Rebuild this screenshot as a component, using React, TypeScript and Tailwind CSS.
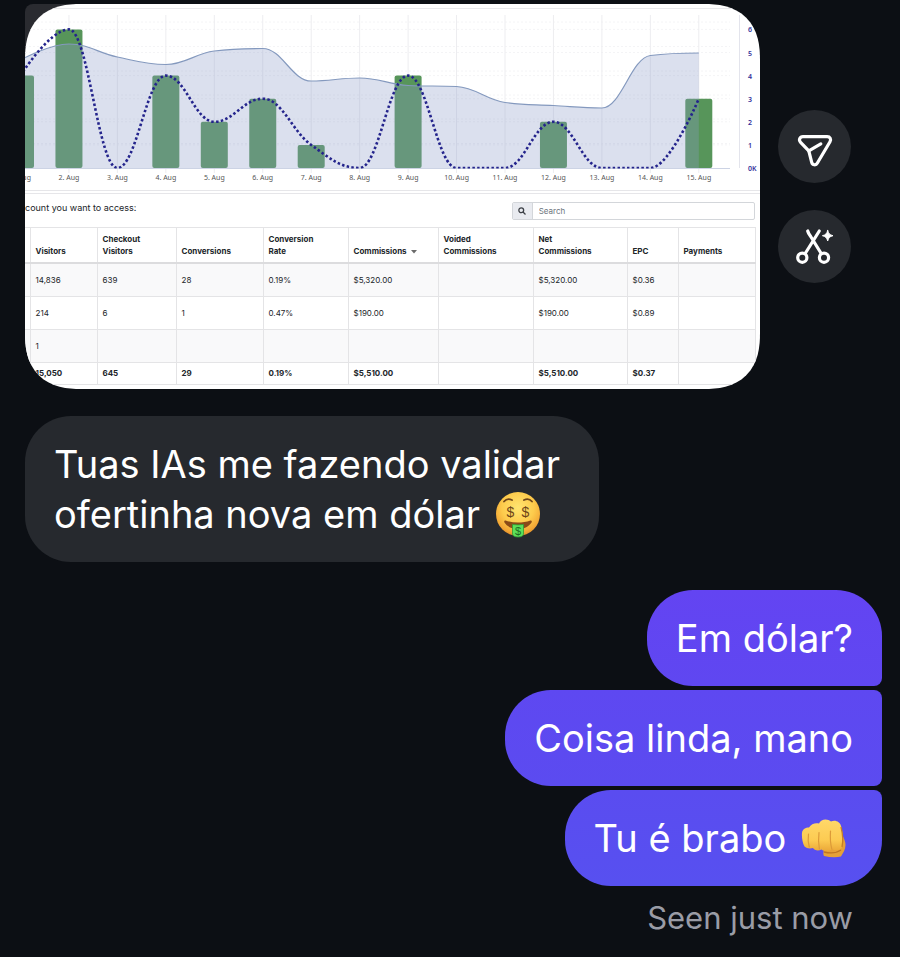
import React from 'react';

interface Point {
  x: number;
  y: number;
}

interface ReportRow {
  visitors: string;
  checkout?: string;
  conversions?: string;
  rate?: string;
  commissions?: string;
  net?: string;
  epc?: string;
}

const ROWS: ReportRow[] = [
  { visitors: '14,836', checkout: '639', conversions: '28', rate: '0.19%', commissions: '$5,320.00', net: '$5,320.00', epc: '$0.36' },
  { visitors: '214', checkout: '6', conversions: '1', rate: '0.47%', commissions: '$190.00', net: '$190.00', epc: '$0.89' },
  { visitors: '1' },
];

const TOTAL: ReportRow = {
  visitors: '15,050', checkout: '645', conversions: '29', rate: '0.19%', commissions: '$5,510.00', net: '$5,510.00', epc: '$0.37',
};

// Daily values for August 1 - 15
const CONVERSIONS = [4, 6, 0, 4, 2, 3, 1, 0, 4, 0, 0, 2, 0, 0, 3];
const VISITORS_Y = [56, 40, 53, 60.5, 47, 44.5, 77, 74, 81.5, 82.5, 98.5, 101.5, 104, 51.5, 49];

const BASE = 164;
const dayX = (i: number) => -4.5 + i * 48.45;
const valueY = (v: number) => BASE - v * 23.1;

// Smooth line through the points without overshooting the local extremes
const spline = (pts: Point[]) => {
  const ctrl = pts.map((p, i) => {
    const prev = pts[i - 1];
    const next = pts[i + 1];
    if (!prev || !next) return { l: p, r: p };
    const l = { x: (1.5 * p.x + prev.x) / 2.5, y: (1.5 * p.y + prev.y) / 2.5 };
    const r = { x: (1.5 * p.x + next.x) / 2.5, y: (1.5 * p.y + next.y) / 2.5 };
    const fix = ((r.y - l.y) * (r.x - p.x)) / (r.x - l.x) + p.y - r.y;
    l.y += fix;
    r.y += fix;
    const lMax = Math.max(prev.y, p.y);
    const lMin = Math.min(prev.y, p.y);
    if (l.y > lMax || l.y < lMin) {
      l.y = l.y > lMax ? lMax : lMin;
      r.y = 2 * p.y - l.y;
    }
    const rMax = Math.max(next.y, p.y);
    const rMin = Math.min(next.y, p.y);
    if (r.y > rMax || r.y < rMin) {
      r.y = r.y > rMax ? rMax : rMin;
      l.y = 2 * p.y - r.y;
    }
    return { l, r };
  });
  return pts.reduce(
    (d, p, i) =>
      i === 0
        ? `M${p.x} ${p.y}`
        : `${d}C${ctrl[i - 1].r.x} ${ctrl[i - 1].r.y} ${ctrl[i].l.x} ${ctrl[i].l.y} ${p.x} ${p.y}`,
    ''
  );
};

const Chart: React.FC = () => {
  const area = spline(VISITORS_Y.map((y, i) => ({ x: dayX(i), y })));
  const dots = spline(CONVERSIONS.map((v, i) => ({ x: dayX(i), y: valueY(v) })));

  return (
    <svg viewBox="0 0 735 186" className="block w-full h-auto" role="img" aria-label="Conversions and visitors by day">
      <clipPath id="plot">
        <rect x="0" y="0" width="735" height="164.5" />
      </clipPath>
      <path d="M0 4.5H735" stroke="#e9e9ec" />
      {[18, 42.5, 67, 91, 115, 139.5].map(y => (
        <path key={y} d={`M0 ${y}H705`} stroke="#f4f4f6" strokeDasharray="2 2" />
      ))}
      {[1, 2, 3, 4, 5, 6].map(v => (
        <path key={v} d={`M0 ${valueY(v)}H705`} stroke="#f4f4f6" strokeDasharray="2 2" />
      ))}
      {CONVERSIONS.map((_, i) => (
        <path key={i} d={`M${dayX(i)} 11V169`} stroke="#ededf0" />
      ))}
      <path d="M714.5 11V164" stroke="#e3e4ec" />
      {CONVERSIONS.map((v, i) =>
        v > 0 ? (
          <rect key={i} x={dayX(i) - 13.5} y={valueY(v)} width="27" height={v * 23.1} rx="2" fill="#57955a" />
        ) : null
      )}
      <path d={`${area}V${BASE}H${dayX(0)}Z`} fill="#8d9dc9" fillOpacity="0.315" />
      <path d={area} fill="none" stroke="#8499be" strokeWidth="1.2" />
      <path d="M0 164.5H705" stroke="#ccd3e4" />
      <path d={dots} fill="none" stroke="#24248c" strokeWidth="2.6" strokeDasharray="2.5 2.3" clipPath="url(#plot)" />
      <g fontFamily="'Noto Sans', sans-serif" fontSize="7" fill="#555" textAnchor="middle">
        <text x="6" y="176" textAnchor="end">ug</text>
        {CONVERSIONS.slice(1).map((_, i) => (
          <text key={i} x={dayX(i + 1)} y="176">{i + 2}. Aug</text>
        ))}
      </g>
      <g fontFamily="'Noto Sans', sans-serif" fontSize="7" fontWeight="600" fill="#33309a">
        {['0K', '1', '2', '3', '4', '5', '6'].map((label, v) => (
          <text key={label} x="723" y={valueY(v) + 3}>{label}</text>
        ))}
      </g>
    </svg>
  );
};

const TH = 'border border-[#e4e4e6] border-b-2 border-b-[#dcdcde] px-[5px] pb-[5px] pt-[5px] align-bottom text-left font-bold';
const TD = 'border border-[#e4e4e6] px-[5px] py-0';

const Cells: React.FC<{ row: ReportRow }> = ({ row }) => (
  <>
    <td className="border border-[#e4e4e6] border-l-0 p-0" />
    <td className={TD}>{row.visitors}</td>
    <td className={TD}>{row.checkout}</td>
    <td className={TD}>{row.conversions}</td>
    <td className={TD}>{row.rate}</td>
    <td className={TD}>{row.commissions}</td>
    <td className={TD} />
    <td className={TD}>{row.net}</td>
    <td className={TD}>{row.epc}</td>
    <td className={TD} />
  </>
);

const ReportCard: React.FC = () => (
  <div className="relative min-w-0 flex-1">
    <div className="absolute left-0 top-0 size-12 rounded-tl-lg bg-[#2a2b30]" />
    <div className="relative overflow-hidden rounded-[56px] bg-white text-[#212529] [corner-shape:superellipse(1.3)]">
      <Chart />
      <div className="h-1 border-y border-[#e6e6e9]" />
      <div className="flex items-start justify-between pb-[7px] pr-[5px] pt-2 text-[8px]">
        <label htmlFor="search" className="text-[9px] leading-[12px]">count you want to access:</label>
        <div className="flex h-[18px] w-1/3 overflow-hidden rounded-xs border border-[#d3d6da]">
          <button aria-label="Search" className="flex w-5 shrink-0 items-center justify-center border-r border-[#d3d6da] bg-[#e9ebf0]">
            <svg viewBox="0 0 16 16" className="size-2" fill="none" stroke="#3c4046" strokeWidth="2.6">
              <circle cx="6.5" cy="6.5" r="4.8" />
              <path d="M10 10l5 5" />
            </svg>
          </button>
          <input id="search" type="text" placeholder="Search" className="min-w-0 flex-1 px-1.5 outline-none placeholder:text-[#6c757d]" />
        </div>
      </div>
      <div className="pb-1 pr-[5px]">
        <table className="w-full table-fixed border-collapse text-[8px] leading-[12px]">
          <colgroup>
            <col className="w-[5px]" />
            <col className="w-[67px]" />
            <col className="w-[79px]" />
            <col className="w-[87px]" />
            <col className="w-[85px]" />
            <col className="w-[90px]" />
            <col className="w-[95px]" />
            <col className="w-[94px]" />
            <col className="w-[51px]" />
            <col className="w-[77px]" />
          </colgroup>
          <thead>
            <tr className="h-[35px]">
              <td className="border border-[#e4e4e6] border-b-2 border-b-[#dcdcde] border-l-0 p-0" />
              <th className={TH}>Visitors</th>
              <th className={TH}>Checkout<br />Visitors</th>
              <th className={TH}>Conversions</th>
              <th className={TH}>Conversion<br />Rate</th>
              <th className={TH}>
                Commissions
                <svg viewBox="0 0 6 4" className="ml-1 inline-block h-1 w-1.5" fill="#6b6b6b"><path d="M0 0h6L3 3.6z" /></svg>
              </th>
              <th className={TH}>Voided<br />Commissions</th>
              <th className={TH}>Net<br />Commissions</th>
              <th className={TH}>EPC</th>
              <th className={TH}>Payments</th>
            </tr>
          </thead>
          <tbody>
            {ROWS.map(row => (
              <tr key={row.visitors} className="h-[33px] odd:bg-[#f9f9fa]">
                <Cells row={row} />
              </tr>
            ))}
          </tbody>
          <tfoot>
            <tr className="h-[22px] font-bold">
              <Cells row={TOTAL} />
            </tr>
          </tfoot>
        </table>
      </div>
    </div>
  </div>
);

const ActionButton: React.FC<{ label: string; children: React.ReactNode }> = ({ label, children }) => (
  <button aria-label={label} className="size-[73px] rounded-full bg-[#26292e]">
    <svg viewBox="0 0 73 73" className="size-full" fill="none" stroke="#fff" strokeWidth="3.2" strokeLinecap="round" strokeLinejoin="round">
      {children}
    </svg>
  </button>
);

const MoneyFace: React.FC = () => (
  <svg viewBox="0 0 46 48" className="ml-1 inline-block h-12 w-[46px] align-[-11px]" role="img" aria-label="🤑">
    <defs>
      <radialGradient id="face" cx="0.5" cy="0.36" r="0.66">
        <stop offset="0" stopColor="#ffe571" />
        <stop offset="0.55" stopColor="#fdcb4c" />
        <stop offset="0.85" stopColor="#f3a836" />
        <stop offset="1" stopColor="#dd8727" />
      </radialGradient>
    </defs>
    <circle cx="23" cy="23" r="22" fill="url(#face)" />
    <path d="M9 10.500C11 8.200 14 7.600 17 9M29 9c3-1.400 6-.8 8 1.500" fill="none" stroke="#6f4518" strokeWidth="1.800" strokeLinecap="round" />
    <path d="M10.500 29.500c8 2.800 17 2.800 25 0 1 0 1.600.8 1.200 1.800C34 35.500 29.500 38 23 38S12 35.500 9.300 31.300c-.4-1 .2-1.800 1.200-1.800z" fill="#8a4b18" />
    <path d="M17.500 33.500q5.500.8 11 0v9.500q-.5 3-5.500 3t-5.500-3z" fill="#5ce05a" stroke="#2e9c35" strokeWidth="0.8" />
    <g fontFamily="'Liberation Sans', sans-serif" fill="#6f4518" textAnchor="middle">
      <text x="15.500" y="26" fontSize="14">$</text>
      <text x="30.500" y="26" fontSize="14">$</text>
      <text x="23" y="44" fontSize="11" fill="#1d6b22">$</text>
    </g>
  </svg>
);

const Fist: React.FC = () => (
  <svg viewBox="0 0 46 40" className="ml-1 mr-1.5 inline-block h-10 w-[46px] align-[-7px]" role="img" aria-label="👊">
    <defs>
      <linearGradient id="fist" x1="0" y1="0" x2="0" y2="1">
        <stop offset="0" stopColor="#ffd869" />
        <stop offset="0.65" stopColor="#fccb52" />
        <stop offset="1" stopColor="#eba838" />
      </linearGradient>
    </defs>
    <path d="M38 12c3 3 6.500 9 6.500 14 0 4.500-2.500 8-4.500 11.500-5 1.200-11 .8-17-.5-1-1.500-.8-4 0-6z" fill="#e6a138" />
    <path d="M23 33c6 1.500 12 1.500 17-2" fill="none" stroke="#bf7623" strokeWidth="1.300" />
    <path d="M1 14C1.500 10 4.500 8.500 8 8.500 10 5 14.500 3.500 18 4.500 20-.5 27-.5 30 2.500c4.500-2 9 .5 10 4.500 1.800 7 2.500 15 1 21-1.200 3.500-7 4.500-10 2-2 2.500-8 2.800-10.500.5-3 1.500-7 1.200-8.500-1.500-3 .8-6.500.5-8.500-1.500C1.500 24 .6 18 1 14z" fill="url(#fist)" />
    <path d="M7.500 15c-.6 4-.4 9 .8 13M18 13.500c-.6 5-.6 11.500.4 16.500M29.500 12c-.4 6-.2 12.500 1.300 18" fill="none" stroke="#dc9a38" strokeWidth="1.200" strokeLinecap="round" />
    <path d="M40 8c1.800 7 2.300 14 1 20" fill="none" stroke="#c57f27" strokeWidth="1.300" />
  </svg>
);

const App: React.FC = () => {
  return (
    <div className="min-h-screen bg-[#0c0f14] font-['Inter',sans-serif] text-white">
      <main className="flex flex-col pb-4 pl-[25px] pt-1">
        <div className="flex items-center gap-[18px] pr-[49px]">
          <ReportCard />
          <div className="flex flex-col gap-[27px]">
            <ActionButton label="Share">
              <path d="M25 26.700h24.200c2.900 0 4.200 2.600 2.800 5L39.400 53c-1.400 2.600-5 2.300-5.700-.7l-2.900-11.400-8.200-8.600c-2.200-2.200-.9-5.600 2.400-5.600z" />
              <path d="M30.800 40.900l12-7" />
            </ActionButton>
            <ActionButton label="Create sticker">
              <circle cx="24.300" cy="47.700" r="4.600" />
              <circle cx="46" cy="47.700" r="4.600" />
              <path d="M29.700 21c.5 2 1.500 3.500 3 5.500L43.200 43.500M41.300 21L27.200 43.500" />
              <path d="M49.700 20.500c.8 3.200 2 4.400 5.300 5.200-3.300.8-4.500 2-5.300 5.300-.8-3.300-2-4.500-5.300-5.300 3.300-.8 4.500-2 5.300-5.200z" fill="#fff" strokeWidth="1" />
            </ActionButton>
          </div>
        </div>

        <p className="mt-[27px] max-w-[574px] self-start rounded-[46px] bg-[#26292e] px-[29px] py-[23px] text-[38px] leading-[50px]">
          Tuas IAs me fazendo validar ofertinha nova em dólar <MoneyFace />
        </p>

        <div className="mt-7 flex flex-col items-end gap-1 pr-[18px] text-[38px] leading-[50px]">
          <p className="rounded-[46px] rounded-br-lg bg-linear-to-b from-[#6344f2] to-[#5f47f1] px-[29px] py-[23px]">Em dólar?</p>
          <p className="rounded-l-[46px] rounded-r-lg bg-linear-to-b from-[#5e48f1] to-[#5b4bf0] px-[29px] py-[23px]">Coisa linda, mano</p>
          <p className="rounded-[46px] rounded-tr-lg bg-linear-to-b from-[#5a4cf0] to-[#5750f0] px-[29px] py-[23px]">
            Tu é brabo <Fist />
          </p>
        </div>

        <p className="mt-3 pr-[47px] text-right text-[31px] leading-[40px] text-[#9a9ca6]">Seen just now</p>
      </main>
    </div>
  );
};

export default App;
